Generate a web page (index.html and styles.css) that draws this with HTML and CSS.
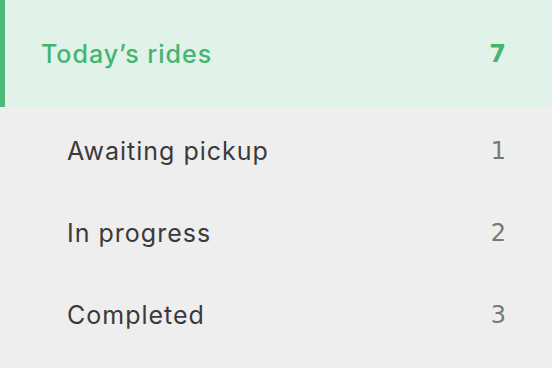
FILE: index.html
```html
<!DOCTYPE html>
<html>
<head>
<meta charset="utf-8">
<link rel="stylesheet" href="styles.css">
</head>
<body>
<nav class="menu">
  <div class="row active">
    <span class="label">Today’s rides</span>
    <span class="count">7</span>
  </div>
  <div class="row sub">
    <span class="label">Awaiting pickup</span>
    <span class="count">1</span>
  </div>
  <div class="row sub">
    <span class="label">In progress</span>
    <span class="count">2</span>
  </div>
  <div class="row sub">
    <span class="label">Completed</span>
    <span class="count">3</span>
  </div>
</nav>
</body>
</html>
```
FILE: styles.css
```css
html, body {
  margin: 0;
  padding: 0;
  background: #eeeeee;
}
body {
  width: 552px;
  height: 368px;
  overflow: hidden;
  font-family: Inter, "Noto Sans", sans-serif;
}
.menu {
  display: flex;
  flex-direction: column;
}
.row {
  display: flex;
  align-items: center;
  justify-content: space-between;
  padding-right: 46px;
  font-size: 25px;
  letter-spacing: 1px;
}
.count {
  letter-spacing: 0;
  font-family: "DejaVu Sans", Inter, sans-serif;
  font-size: 24px;
}
.active {
  height: 107px;
  background: #e1f3e8;
  border-left: 5px solid #4cb87a;
  padding-left: 36px;
  color: #44b471;
  font-weight: 500;
  box-sizing: border-box;
}
.active .count {
  font-weight: 700;
}
.sub {
  height: 82px;
  padding-left: 67px;
  color: #3a3a3a;
  font-weight: 400;
}
.sub .count {
  color: #777777;
}
.active + .sub {
  margin-top: 3px;
}
```
